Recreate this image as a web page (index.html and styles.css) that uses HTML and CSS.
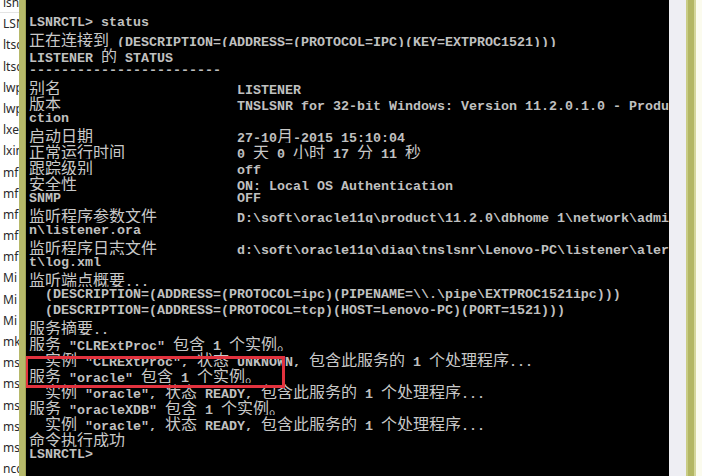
FILE: index.html
```html
<!DOCTYPE html>
<html lang="zh-CN">
<head>
    <meta charset="UTF-8">
    <meta name="viewport" content="width=device-width, initial-scale=1.0">
    <title>LSNRCTL status</title>

    <link rel="stylesheet" href="styles.css">

</head>

<body>

    <div class="files">
        <div class="file first">lsnr</div>
        <div class="file">LSNR</div>
        <div class="file">ltsc</div>
        <div class="file">ltsc</div>
        <div class="file">lwp</div>
        <div class="file">lwp</div>
        <div class="file">lxe</div>
        <div class="file">lxin</div>
        <div class="file">mf</div>
        <div class="file">mf</div>
        <div class="file">mf</div>
        <div class="file">mf</div>
        <div class="file">mf</div>
        <div class="file">Mi</div>
        <div class="file">Mi</div>
        <div class="file">Mi</div>
        <div class="file">mk</div>
        <div class="file">ms</div>
        <div class="file">ms</div>
        <div class="file">ms</div>
        <div class="file">ms</div>
        <div class="file">ms</div>
        <div class="file">ncc</div>
    </div>

    <div class="edge"></div>

    <div class="console">

        <div class="line">LSNRCTL&gt; status</div>
        <div class="line"><span class="zh">正在连接到</span> (DESCRIPTION=(ADDRESS=(PROTOCOL=IPC)(KEY=EXTPROC1521)))</div>
        <div class="line">LISTENER <span class="zh">的</span> STATUS</div>
        <div class="line">------------------------</div>

        <div class="line"><span class="label"><span class="zh">别名</span></span>LISTENER</div>
        <div class="line"><span class="label"><span class="zh">版本</span></span>TNSLSNR for 32-bit Windows: Version 11.2.0.1.0 - Produ</div>
        <div class="line">ction</div>
        <div class="line"><span class="label"><span class="zh">启动日期</span></span>27-10<span class="zh">月</span>-2015 15:10:04</div>
        <div class="line"><span class="label"><span class="zh">正常运行时间</span></span>0 <span class="zh">天</span> 0 <span class="zh">小时</span> 17 <span class="zh">分</span> 11 <span class="zh">秒</span></div>
        <div class="line"><span class="label"><span class="zh">跟踪级别</span></span>off</div>
        <div class="line"><span class="label"><span class="zh">安全性</span></span>ON: Local OS Authentication</div>
        <div class="line"><span class="label">SNMP</span>OFF</div>
        <div class="line"><span class="label"><span class="zh">监听程序参数文件</span></span>D:\soft\oracle11g\product\11.2.0\dbhome_1\network\admi</div>
        <div class="line">n\listener.ora</div>
        <div class="line"><span class="label"><span class="zh">监听程序日志文件</span></span>d:\soft\oracle11g\diag\tnslsnr\Lenovo-PC\listener\aler</div>
        <div class="line">t\log.xml</div>
        <div class="line"><span class="zh">监听端点概要</span>...</div>
        <div class="line">  (DESCRIPTION=(ADDRESS=(PROTOCOL=ipc)(PIPENAME=\\.\pipe\EXTPROC1521ipc)))</div>
        <div class="line">  (DESCRIPTION=(ADDRESS=(PROTOCOL=tcp)(HOST=Lenovo-PC)(PORT=1521)))</div>

        <div class="line"><span class="zh">服务摘要</span>..</div>
        <div class="line"><span class="zh">服务</span> "CLRExtProc" <span class="zh">包含</span> 1 <span class="zh">个实例。</span></div>
        <div class="line">  <span class="zh">实例</span> "CLRExtProc", <span class="zh">状态</span> UNKNOWN, <span class="zh">包含此服务的</span> 1 <span class="zh">个处理程序</span>...</div>
        <div class="line"><span class="zh">服务</span> "oracle" <span class="zh">包含</span> 1 <span class="zh">个实例。</span></div>
        <div class="line">  <span class="zh">实例</span> "oracle", <span class="zh">状态</span> READY, <span class="zh">包含此服务的</span> 1 <span class="zh">个处理程序</span>...</div>
        <div class="line"><span class="zh">服务</span> "oracleXDB" <span class="zh">包含</span> 1 <span class="zh">个实例。</span></div>
        <div class="line">  <span class="zh">实例</span> "oracle", <span class="zh">状态</span> READY, <span class="zh">包含此服务的</span> 1 <span class="zh">个处理程序</span>...</div>
        <div class="line"><span class="zh">命令执行成功</span></div>
        <div class="line">LSNRCTL&gt;</div>

        <!-- red mark drawn over the oracle service line -->
        <div class="mark"></div>

    </div>

    <div class="scroll"></div>
    <div class="edge edge-right"></div>
    <div class="pane"></div>

</body>

</html>
```

FILE: styles.css
```css
*, html {
    box-sizing: border-box;
    margin: 0;
    padding: 0;
}

body {
    display: flex;
    width: 702px;
    height: 476px;
    overflow: hidden;
    background: #ffffff;
}

.files {
    width: 19px;
    flex-shrink: 0;
    overflow: hidden;
    margin-top: -8px;
    background: #ffffff;
}

.file {
    height: 21.2px;
    line-height: 21.2px;
    padding-left: 3px;
    font-family: "Noto Sans", "Liberation Sans", sans-serif;
    font-size: 12px;
    color: #2a2a2a;
    white-space: nowrap;
}

.first {
    border-bottom: 1px solid #e4e4e4;
}

.edge {
    width: 7px;
    flex-shrink: 0;
    background: #b6b96a;
    border-right: 1px solid #9fa255;
}

.console {
    position: relative;
    width: 643px;
    flex-shrink: 0;
    padding: 15px 0 0 3px;
    background: #000000;
    color: #c0c0c0;
    font-family: "Liberation Mono", monospace;
    font-weight: bold;
    font-size: 13.333px;
    overflow: hidden;
}

.line {
    height: 16px;
    line-height: 16px;
    white-space: pre;
    overflow: hidden;
}

.label {
    display: inline-block;
    width: 208px;
}

/* cjk glyphs take two console cells */
.zh {
    font-family: "Noto Sans CJK SC", sans-serif;
    font-weight: normal;
    font-size: 16px;
    line-height: 16px;
    color: #c8c8c8;
}

.mark {
    position: absolute;
    left: -1px;
    top: 356px;
    width: 260px;
    height: 32px;
    border: 3px solid #e2323e;
}

.scroll {
    width: 17px;
    flex-shrink: 0;
    background: #eeeef3;
}

.edge-right {
    width: 10px;
    background: #b3b663;
    border-left: 2px solid #c9cc84;
    border-right: 2px solid #d4d69a;
}

.pane {
    flex: 1;
    background: #fbfbee;
}
```
